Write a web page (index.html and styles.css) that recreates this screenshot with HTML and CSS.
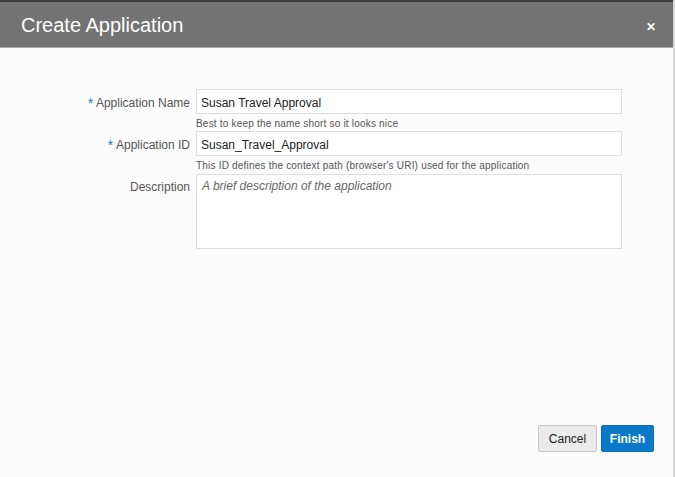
FILE: index.html
```html
<!DOCTYPE html>
<html>
<head>
<meta charset="utf-8">
<link rel="stylesheet" href="styles.css">
</head>
<body>
<div class="dialog">
  <header class="header">
    <h1 class="title">Create Application</h1>
    <span class="close">&#x2715;</span>
  </header>
  <main class="content">
    <div class="form">
      <label class="label"><span class="req">*</span> Application Name</label>
      <div class="field">
        <div class="input">Susan Travel Approval</div>
        <div class="hint">Best to keep the name short so it looks nice</div>
      </div>
      <label class="label"><span class="req">*</span> Application ID</label>
      <div class="field">
        <div class="input">Susan_Travel_Approval</div>
        <div class="hint">This ID defines the context path (browser's URI) used for the application</div>
      </div>
      <label class="label desc">Description</label>
      <div class="field">
        <div class="textarea">A brief description of the application</div>
      </div>
    </div>
  </main>
  <footer class="footer">
    <button class="btn cancel">Cancel</button>
    <button class="btn finish">Finish</button>
  </footer>
</div>
</body>
</html>
```
FILE: styles.css
```css
html, body {
  margin: 0;
  padding: 0;
  height: 100%;
}
body {
  font-family: "Liberation Sans", Arial, sans-serif;
  background: #fcfcfc;
}
.dialog {
  height: 477px;
  display: flex;
  flex-direction: column;
  border-right: 2px solid #d8d8d8;
  box-sizing: border-box;
  width: 675px;
}
.header {
  height: 45px;
  background: #737373;
  border-top: 2px solid #3b3b3b;
  border-bottom: 1px solid #a9a9a9;
  display: flex;
  align-items: center;
  justify-content: space-between;
  padding: 0 17px 0 21px;
}
.title {
  margin: 2px 0 0;
  color: #fff;
  font-size: 20px;
  font-weight: normal;
}
.close {
  color: #fff;
  font-size: 12px;
  font-weight: bold;
  margin-top: 4px;
}
.content {
  flex: 1;
  padding-top: 41px;
}
.form {
  display: grid;
  grid-template-columns: 190px 426px;
  column-gap: 6px;
  row-gap: 0;
}
.label {
  text-align: right;
  font-size: 12px;
  color: #555;
  padding-top: 6px;
}
.label.desc {
  padding-top: 7px;
}
.req {
  color: #2a7ab8;
  font-size: 14px;
  vertical-align: -1px;
}
.field {
  display: flex;
  flex-direction: column;
}
.input {
  height: 25px;
  box-sizing: border-box;
  border: 1px solid #dedede;
  background: #fff;
  font-size: 12px;
  color: #222;
  padding: 6px 4px 0;
}
.hint {
  font-size: 10px;
  color: #555;
  letter-spacing: 0.2px;
  padding: 5px 0 2px;
  height: 10px;
  line-height: 10px;
}
.hint + * {
  margin-top: 0;
}
.field:last-child .textarea {
  margin-top: 1px;
}
.textarea {
  height: 75px;
  box-sizing: border-box;
  border: 1px solid #dedede;
  background: #fff;
  font-size: 12px;
  font-style: italic;
  color: #666;
  padding: 4px 5px;
}
.footer {
  display: flex;
  justify-content: flex-end;
  gap: 4px;
  padding: 0 19px 25px 0;
}
.btn {
  font-family: "Liberation Sans", Arial, sans-serif;
  font-size: 12px;
  height: 27px;
  border-radius: 2px;
  padding: 0;
}
.cancel {
  width: 59px;
  background: #ebebeb;
  border: 1px solid #c7c7c7;
  color: #222;
}
.finish {
  width: 53px;
  background: #0b79c9;
  border: 1px solid #0a6fb8;
  color: #fff;
  font-weight: bold;
}
```
